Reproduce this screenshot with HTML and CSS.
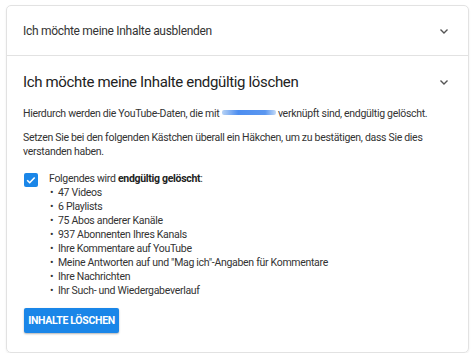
FILE: index.html
```html
<!DOCTYPE html>
<html>
	<head>
		<meta charset="UTF-8">
		<title>Inhalte löschen</title>
		<link rel="stylesheet" href="styles.css">
	</head>
	<body>
		<div class="card">
			<div class="section">
				<div class="head">
					<span class="title">Ich möchte meine Inhalte ausblenden</span>
					<svg class="chevron" width="12" height="12" viewBox="0 0 12 12"><path d="M2.5 4.5L6 8l3.5-3.5" fill="none" stroke="#555" stroke-width="1.4"/></svg>
				</div>
			</div>
			<div class="section open">
				<div class="head">
					<span class="title big">Ich möchte meine Inhalte endgültig löschen</span>
					<svg class="chevron" width="12" height="12" viewBox="0 0 12 12"><path d="M2.5 4.5L6 8l3.5-3.5" fill="none" stroke="#555" stroke-width="1.4"/></svg>
				</div>
				<div class="body">
					<p>Hierdurch werden die YouTube-Daten, die mit <span class="blur"></span> verknüpft sind, endgültig gelöscht.</p>
					<p>Setzen Sie bei den folgenden Kästchen überall ein Häkchen, um zu bestätigen, dass Sie dies verstanden haben.</p>
					<div class="check">
						<span class="box">
							<svg width="14" height="14" viewBox="0 0 14 14"><path d="M3.2 7.2l2.5 2.5 5-5.2" fill="none" stroke="#fff" stroke-width="1.6"/></svg>
						</span>
						<div class="check-text">
							Folgendes wird <b>endgültig gelöscht</b>:
							<ul>
								<li>47 Videos</li>
								<li>6 Playlists</li>
								<li>75 Abos anderer Kanäle</li>
								<li>937 Abonnenten Ihres Kanals</li>
								<li>Ihre Kommentare auf YouTube</li>
								<li>Meine Antworten auf und "Mag ich"-Angaben für Kommentare</li>
								<li>Ihre Nachrichten</li>
								<li>Ihr Such- und Wiedergabeverlauf</li>
							</ul>
						</div>
					</div>
					<button class="btn">INHALTE LÖSCHEN</button>
				</div>
			</div>
		</div>
	</body>
</html>
```
FILE: styles.css
```css
body, ul, p {
	padding: 0;
	margin: 0;
}
body {
	background: #fff;
	font-family: Roboto, "Liberation Sans", Arial, sans-serif;
	color: #333;
}

.card {
	margin: 5px 5px 0 6px;
	height: 348px;
	box-sizing: border-box;
	border: 1px solid #e2e2e2;
	border-radius: 5px;
	box-shadow: 0 1px 2px rgba(0,0,0,0.08);
}

.section + .section {
	border-top: 1px solid #e2e2e2;
}

.head {
	display: flex;
	align-items: center;
	justify-content: space-between;
	height: 49px;
	padding: 0 18px 0 16px;
}
.open .head {
	height: 51px;
}

.title {
	font-size: 12px;
	letter-spacing: -0.3px;
	color: #333;
}
.title.big {
	font-size: 15px;
	letter-spacing: -0.35px;
	color: #222;
}

.body {
	padding: 0 16px 0 16px;
	font-size: 10.5px;
	letter-spacing: -0.3px;
	line-height: 14px;
	color: #333;
}
.body p {
	margin-bottom: 10px;
}

.blur {
	display: inline-block;
	width: 54px;
	height: 5px;
	vertical-align: 2px;
	background: linear-gradient(90deg, #b8d3f5, #4d8ef0 30%, #5b97f0 80%, #c3daf7);
	border-radius: 2px;
}

.check {
	display: flex;
	align-items: flex-start;
	margin-top: 13px;
}
.box {
	width: 14px;
	height: 14px;
	border-radius: 2px;
	background: #1a86e8;
	display: flex;
	margin: 1px 11px 0 1px;
}
.check-text b {
	font-weight: 700;
	color: #222;
}
.check-text ul {
	padding-left: 1px;
	list-style: none;
}
.check-text li::before {
	content: "•";
	display: inline-block;
	width: 8px;
}

.btn {
	margin-top: 10px;
	margin-left: 1px;
	width: 95px;
	height: 25px;
	border: none;
	border-radius: 2px;
	background: #1a86e8;
	color: #fff;
	font-family: Roboto, "Liberation Sans", Arial, sans-serif;
	font-weight: 700;
	font-size: 10.5px;
	letter-spacing: -0.3px;
	white-space: nowrap;
	padding: 0;
	box-shadow: 0 1px 2px rgba(0,0,0,0.3);
}
```
